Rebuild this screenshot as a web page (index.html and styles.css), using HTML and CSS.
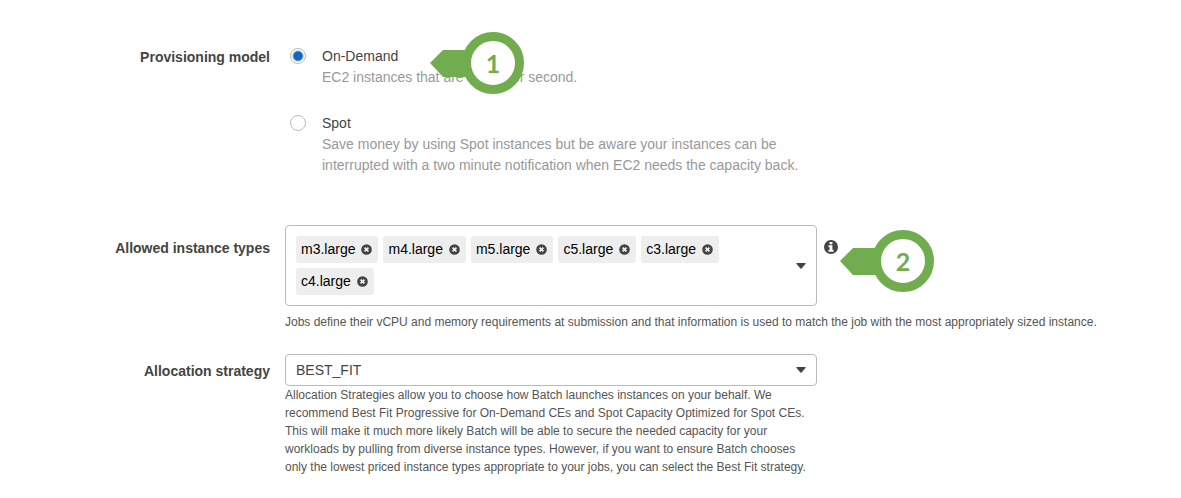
FILE: index.html
```html
<!DOCTYPE html>
<html lang="en">
<head>
<meta charset="utf-8">
<meta name="viewport" content="width=device-width, initial-scale=1">
<title>Compute environment</title>
<link rel="stylesheet" href="styles.css">
</head>
<body>
<svg class="symbols" aria-hidden="true">
  <symbol id="remove" viewBox="0 0 11 11">
    <circle cx="5.5" cy="5.5" r="5.3" fill="#444"/>
    <path d="M3.6 3.6L7.4 7.4M7.4 3.6L3.6 7.4" stroke="#eee" stroke-width="1.8"/>
  </symbol>
  <symbol id="caret" viewBox="0 0 10 6">
    <path d="M0.8 0H9.2Q10 0 9.6 0.7L5.6 5.5Q5 6 4.4 5.5L0.4 0.7Q0 0 0.8 0Z" fill="#444"/>
  </symbol>
  <symbol id="marker" viewBox="0 0 94 62">
    <path d="M0 31L13 18H45V45H13Z" fill="#71ad4f"/>
    <circle cx="63" cy="31" r="26.5" fill="#fff" stroke="#71ad4f" stroke-width="9"/>
  </symbol>
</svg>
<form class="form">
  <div class="row row-model" role="radiogroup" aria-labelledby="model-label">
    <div class="label" id="model-label">Provisioning model</div>
    <div class="field options">
      <div class="option">
        <input class="radio" type="radio" name="model" id="on-demand" checked>
        <div class="option-text">
          <label class="option-title" for="on-demand">On-Demand</label>
          <p class="option-note">EC2 instances that are billed per second.</p>
        </div>
        <div class="marker marker-first"><svg class="marker-shape" aria-hidden="true"><use href="#marker"/></svg><span class="marker-number">1</span></div>
      </div>
      <div class="option">
        <input class="radio" type="radio" name="model" id="spot">
        <div class="option-text">
          <label class="option-title" for="spot">Spot</label>
          <p class="option-note">Save money by using Spot instances but be aware your instances can be interrupted with a two minute notification when EC2 needs the capacity back.</p>
        </div>
      </div>
    </div>
  </div>

  <div class="row row-types">
    <div class="label" id="types-label">Allowed instance types</div>
    <div class="field">
      <div class="control-line">
        <div class="multi" role="group" aria-labelledby="types-label">
          <ul class="tags">
            <li class="tag">m3.large<button class="remove" type="button" aria-label="Remove m3.large"><svg class="remove-icon"><use href="#remove"/></svg></button></li>
            <li class="tag">m4.large<button class="remove" type="button" aria-label="Remove m4.large"><svg class="remove-icon"><use href="#remove"/></svg></button></li>
            <li class="tag">m5.large<button class="remove" type="button" aria-label="Remove m5.large"><svg class="remove-icon"><use href="#remove"/></svg></button></li>
            <li class="tag">c5.large<button class="remove" type="button" aria-label="Remove c5.large"><svg class="remove-icon"><use href="#remove"/></svg></button></li>
            <li class="tag">c3.large<button class="remove" type="button" aria-label="Remove c3.large"><svg class="remove-icon"><use href="#remove"/></svg></button></li>
            <li class="tag">c4.large<button class="remove" type="button" aria-label="Remove c4.large"><svg class="remove-icon"><use href="#remove"/></svg></button></li>
          </ul>
          <button class="open" type="button" aria-label="Show instance types"><svg class="caret"><use href="#caret"/></svg></button>
        </div>
        <button class="info" type="button" aria-label="About instance types">
          <svg class="info-icon" viewBox="0 0 14 14">
            <circle cx="7" cy="7" r="7" fill="#444"/>
            <path d="M5.6 2H8.4V4.3H5.6ZM4.5 5.3H8.4V9.8H9.5V11.8H4.5V9.8H5.6V7.2H4.5Z" fill="#fff"/>
          </svg>
        </button>
        <div class="marker marker-second"><svg class="marker-shape" aria-hidden="true"><use href="#marker"/></svg><span class="marker-number">2</span></div>
      </div>
      <p class="hint">Jobs define their vCPU and memory requirements at submission and that information is used to match the job with the most appropriately sized instance.</p>
    </div>
  </div>

  <div class="row row-strategy">
    <label class="label" for="strategy">Allocation strategy</label>
    <div class="field">
      <div class="select-wrap">
        <select class="select" id="strategy"><option>BEST_FIT</option></select>
        <svg class="caret select-caret" aria-hidden="true"><use href="#caret"/></svg>
      </div>
      <p class="hint hint-narrow">Allocation Strategies allow you to choose how Batch launches instances on your behalf. We recommend Best Fit Progressive for On-Demand CEs and Spot Capacity Optimized for Spot CEs. This will make it much more likely Batch will be able to secure the needed capacity for your workloads by pulling from diverse instance types. However, if you want to ensure Batch chooses only the lowest priced instance types appropriate to your jobs, you can select the Best Fit strategy.</p>
    </div>
  </div>
</form>
</body>
</html>
```

FILE: styles.css
```css
* {
  box-sizing: border-box;
}

body {
  margin: 0;
  background: #fff;
  color: #444;
  font-family: "Liberation Sans", Arial, sans-serif;
  font-size: 14px;
  line-height: 21px;
}

p,
ul {
  margin: 0;
  padding: 0;
}

button {
  display: flex;
  padding: 0;
  border: 0;
  background: none;
  cursor: pointer;
}

.symbols {
  position: absolute;
  width: 0;
  height: 0;
}

.form {
  padding: 46px 16px 20px 0;
}

.row {
  display: grid;
  grid-template-columns: 270px minmax(0, 1fr);
  column-gap: 15px;
}

.row-types {
  margin-top: 49px;
}

.row-strategy {
  margin-top: 23px;
}

.label {
  font-weight: bold;
  text-align: right;
}

.row-model .label {
  padding-top: 1px;
}

.row-types .label {
  padding-top: 13px;
}

.row-strategy .label {
  padding-top: 7px;
}

.options {
  display: flex;
  flex-direction: column;
  gap: 25px;
  max-width: 532px;
}

.option {
  position: relative;
  display: flex;
  align-items: flex-start;
  gap: 16px;
  padding-left: 5px;
}

.radio {
  appearance: none;
  flex: none;
  width: 16px;
  height: 16px;
  margin: 2px 0 0;
  border: 1px solid #bbb;
  border-radius: 50%;
  background: #fff;
}

.radio:checked {
  background: radial-gradient(circle, #1166bb 4px, #fff 6px);
}

.option-note {
  color: #999;
}

.control-line {
  position: relative;
  display: flex;
  align-items: flex-start;
  gap: 7px;
}

.multi {
  display: flex;
  justify-content: space-between;
  width: 100%;
  max-width: 532px;
  padding: 10px;
  border: 1px solid #bbb;
  border-radius: 4px;
}

.tags {
  display: flex;
  flex-wrap: wrap;
  gap: 5px;
  max-width: 440px;
  list-style: none;
}

.tag {
  display: flex;
  align-items: center;
  gap: 6px;
  padding: 3px 6px 3px 5px;
  border-radius: 3px;
  background: #eee;
  color: #000;
}

.remove-icon {
  width: 11px;
  height: 11px;
}

.open {
  align-items: center;
}

.caret {
  width: 10px;
  height: 6px;
}

.info {
  margin-top: 15px;
}

.info-icon {
  width: 14px;
  height: 14px;
}

.hint {
  padding-top: 7px;
  color: #555;
  font-size: 12px;
  line-height: 18px;
}

.hint-narrow {
  max-width: 532px;
  padding-top: 0;
}

.select-wrap {
  position: relative;
  max-width: 532px;
}

.select {
  appearance: none;
  display: block;
  width: 100%;
  height: 32px;
  padding: 0 32px 0 10px;
  border: 1px solid #bbb;
  border-radius: 4px;
  background: #fff;
  color: #444;
  font: inherit;
}

.select-caret {
  position: absolute;
  top: 13px;
  right: 11px;
  pointer-events: none;
}

.marker {
  position: absolute;
  width: 94px;
  height: 62px;
}

.marker-first {
  top: -14px;
  left: 145px;
}

.marker-second {
  top: 5px;
  left: 555px;
}

.marker-shape {
  display: block;
  width: 94px;
  height: 62px;
}

.marker-number {
  position: absolute;
  top: 0;
  right: 0;
  width: 62px;
  color: #71ad4f;
  font-family: Lato, sans-serif;
  font-size: 25px;
  font-weight: bold;
  line-height: 62px;
  text-align: center;
}
```
